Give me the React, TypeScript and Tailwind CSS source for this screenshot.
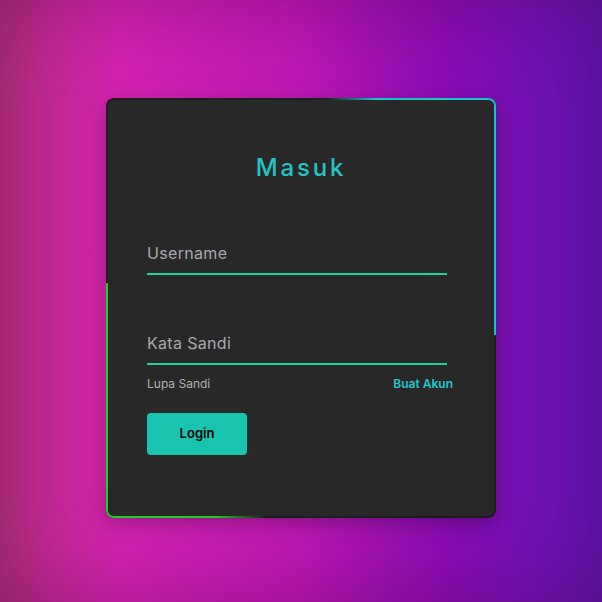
import { useState } from "react";

export default function App() {
  const [user, setUser] = useState("");
  const [pass, setPass] = useState("");

  return (
    <div className="flex h-[602px] w-[602px] items-start justify-center bg-[linear-gradient(90deg,#b8307e_0%,#d422b2_20%,#bc18b4_50%,#8a0cb4_75%,#5e16b2_100%)] pt-[98px] shadow-[inset_0_0_90px_rgba(60,0,60,0.35)] font-['Inter','Liberation_Sans',sans-serif]">
      <div className="relative h-[420px] w-[390px] rounded-lg bg-[#1d1d1f] p-[2px] shadow-[0_6px_20px_rgba(0,0,0,0.25)]">
        {/* animated border segments */}
        <span className="absolute right-[120px] top-0 h-[2px] w-[50px] bg-[linear-gradient(90deg,transparent,#14c4cc)]" />
        <span className="absolute right-0 top-0 h-[237px] w-[120px] rounded-tr-lg border-r-2 border-t-2 border-[#14c4cc]" />
        <span className="absolute bottom-0 left-0 h-[235px] w-[110px] rounded-bl-lg border-b-2 border-l-2 border-[#1ecc24]" />
        <span className="absolute bottom-0 left-[110px] h-[2px] w-[50px] bg-[linear-gradient(90deg,#1ecc24,transparent)]" />

        <div className="relative flex h-full w-full flex-col rounded-md bg-[#282829] px-[39px] pt-[50px]">
          <h1 className="text-center text-[24px] font-medium leading-[36px] tracking-[0.12em] text-[#22c4c6]">
            Masuk
          </h1>

          <label className="mt-[55px] block w-[300px]">
            <input
              value={user}
              onChange={(e) => setUser(e.target.value)}
              placeholder="Username"
              className="w-full border-b-2 border-[#1fd39a] bg-transparent pb-[9px] text-[16px] leading-[22px] tracking-[0.02em] text-[#ddd] outline-none placeholder:text-[#a9a9a9]"
            />
          </label>

          <label className="mt-[56px] block w-[300px]">
            <input
              type="password"
              value={pass}
              onChange={(e) => setPass(e.target.value)}
              placeholder="Kata Sandi"
              className="w-full border-b-2 border-[#1fd39a] bg-transparent pb-[9px] text-[16px] leading-[22px] tracking-[0.02em] text-[#ddd] outline-none placeholder:text-[#a9a9a9]"
            />
          </label>

          <div className="mt-[10px] flex w-[306px] items-center justify-between text-[12px] leading-[18px]">
            <a href="#" className="text-[#b2b2b2]">
              Lupa Sandi
            </a>
            <a href="#" className="font-semibold text-[#20c8cf]">
              Buat Akun
            </a>
          </div>

          <button className="mt-[20px] h-[42px] w-[100px] rounded-[4px] bg-[#18c4b0] text-[13px] font-semibold text-black">
            Login
          </button>
        </div>
      </div>
    </div>
  );
}
